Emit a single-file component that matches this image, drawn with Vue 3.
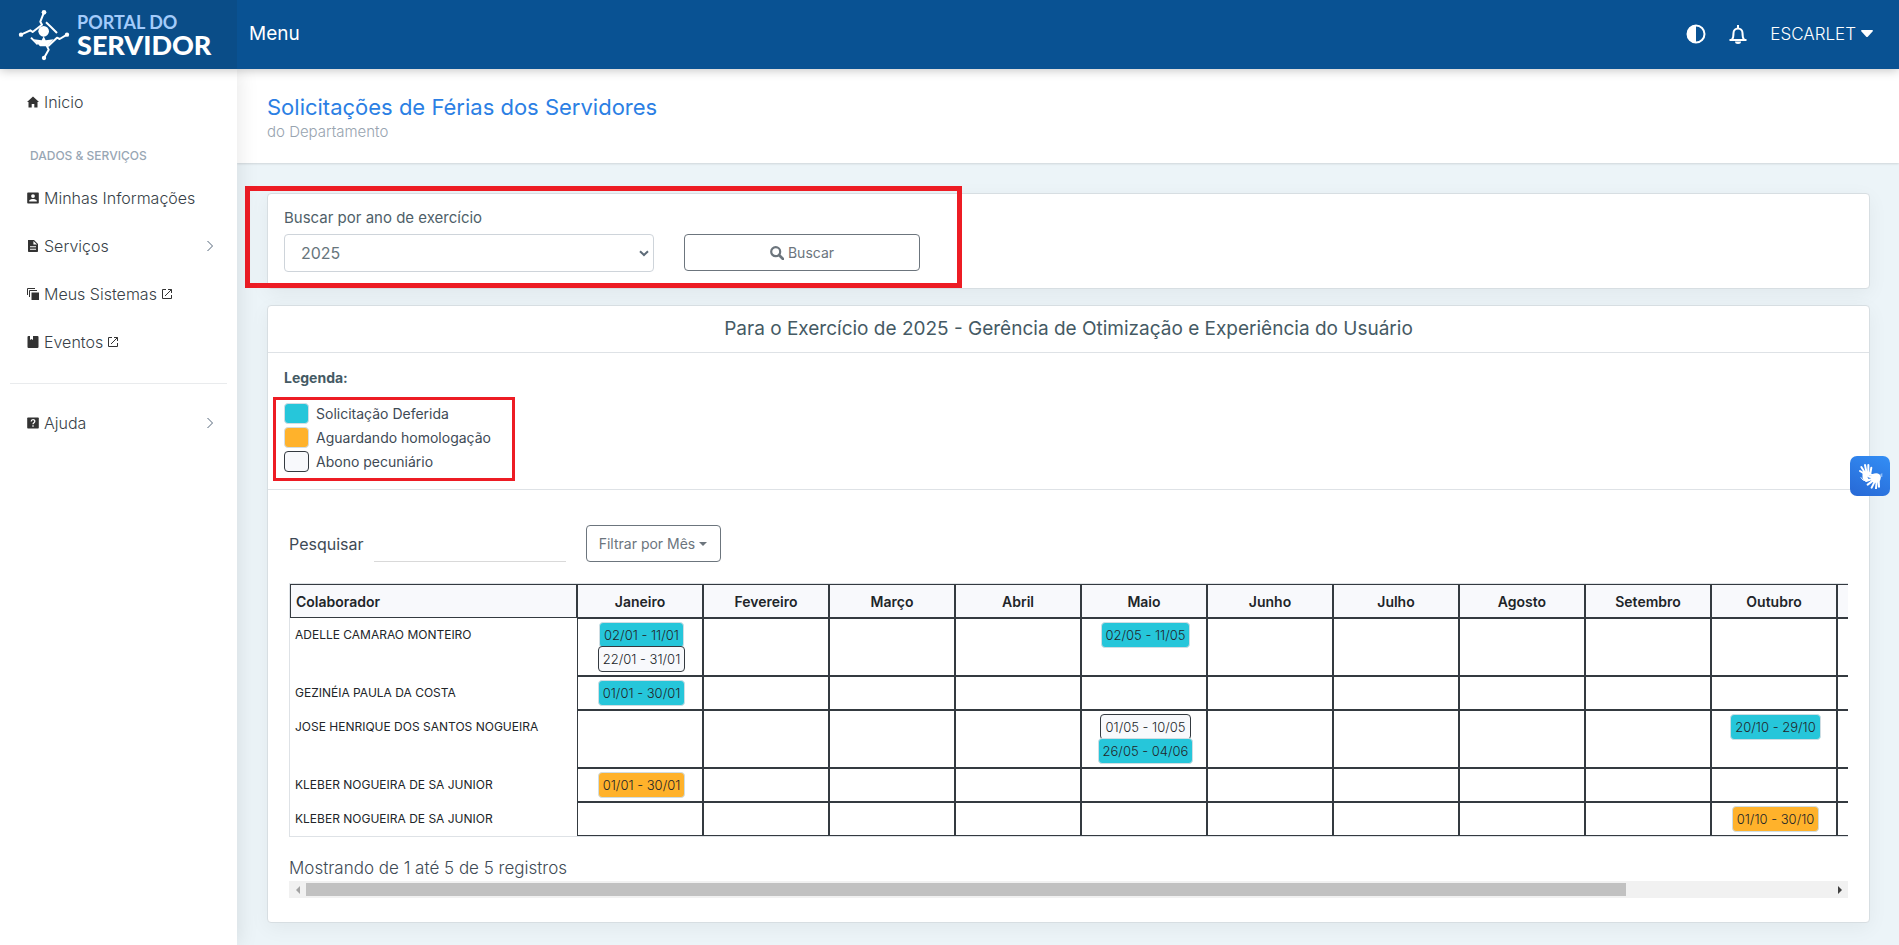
<script setup>
import { ref, onMounted } from 'vue'

const months = ['Janeiro', 'Fevereiro', 'Março', 'Abril', 'Maio', 'Junho', 'Julho', 'Agosto', 'Setembro', 'Outubro', 'Novembro', 'Dezembro']

const rows = [
  {
    name: 'ADELLE CAMARAO MONTEIRO',
    periods: {
      0: [{ text: '02/01 - 11/01', kind: 'granted' }, { text: '22/01 - 31/01', kind: 'bonus' }],
      4: [{ text: '02/05 - 11/05', kind: 'granted' }],
    },
  },
  { name: 'GEZINÉIA PAULA DA COSTA', periods: { 0: [{ text: '01/01 - 30/01', kind: 'granted' }] } },
  {
    name: 'JOSE HENRIQUE DOS SANTOS NOGUEIRA',
    periods: {
      4: [{ text: '01/05 - 10/05', kind: 'bonus' }, { text: '26/05 - 04/06', kind: 'granted' }],
      9: [{ text: '20/10 - 29/10', kind: 'granted' }],
    },
  },
  { name: 'KLEBER NOGUEIRA DE SA JUNIOR', periods: { 0: [{ text: '01/01 - 30/01', kind: 'pending' }] } },
  { name: 'KLEBER NOGUEIRA DE SA JUNIOR', periods: { 9: [{ text: '01/10 - 30/10', kind: 'pending' }] } },
]

const legend = [
  { text: 'Solicitação Deferida', kind: 'granted' },
  { text: 'Aguardando homologação', kind: 'pending' },
  { text: 'Abono pecuniário', kind: 'bonus' },
]

const year = ref('2025')
const search = ref('')
const scroller = ref(null)
const thumb = ref(86)
const offset = ref(0)

function measure() {
  const el = scroller.value
  if (!el) return
  thumb.value = (el.clientWidth / el.scrollWidth) * 100
  offset.value = (el.scrollLeft / el.scrollWidth) * 100
}
function move(step) {
  scroller.value.scrollLeft += step
  measure()
}
onMounted(() => {
  measure()
  window.addEventListener('resize', measure)
})
</script>

<template>
  <div class="app">
    <header class="topbar">
      <a class="brand" href="#">
        <svg class="brand-mark" viewBox="54 30 156 156" aria-hidden="true">
          <g fill="none" stroke="#fff" stroke-width="6" stroke-linejoin="round">
            <path d="M132 40 121 68l5 9-28 22-7-5-28 13" />
            <path d="M138 70l15 14 18 18" />
            <path d="M201 107l-22 13-8-4-27 26" />
            <path d="M93 116l20 20" />
            <path d="M132 177l14-25-6-12" />
          </g>
          <g fill="#fff">
            <circle cx="132" cy="40" r="7" />
            <circle cx="63" cy="107" r="6.500" />
            <circle cx="201" cy="107" r="6.500" />
            <circle cx="132" cy="177" r="6.500" />
            <circle cx="131" cy="97" r="16" />
            <path d="M101 121l24 3 6-12 6 12 24-3-19 21h-22z" />
          </g>
        </svg>
        <span class="brand-text"><span class="brand-top">PORTAL DO</span><span class="brand-main">SERVIDOR</span></span>
      </a>
      <button class="menu-button" type="button">Menu</button>
      <div class="tools">
        <button class="icon-button" type="button" aria-label="Contraste">
          <svg width="20" height="20" viewBox="0 0 20 20"><circle cx="10" cy="10" r="8.500" fill="none" stroke="#fff" stroke-width="2" /><path d="M10 1a9 9 0 0 0 0 18z" fill="#fff" /></svg>
        </button>
        <button class="icon-button" type="button" aria-label="Notificações">
          <svg width="20" height="20" viewBox="0 0 20 20"><path d="M1.500 16h17M4 15.500c1.500-1.700 1.500-3 1.500-6.500a4.500 4.500 0 0 1 9 0c0 3.500 0 4.800 1.500 6.500M10 4V1" fill="none" stroke="#fff" stroke-width="2" /><path d="M7 17.500h6a3 2.500 0 0 1-6 0z" fill="#fff" /></svg>
        </button>
        <button class="user-button" type="button">ESCARLET <svg width="12" height="7" viewBox="0 0 12 7"><path d="M0 1q0-1 1-1h10q1 0 1 1L7 6.500q-1 1-2 0z" fill="#fff" /></svg></button>
      </div>
    </header>

    <div class="body">
      <nav class="sidebar">
        <a class="nav-item" href="#">
          <svg class="nav-icon" viewBox="0 0 12 12"><path d="M6 .5 12 6h-1.500v5.500H7.300V8H4.700v3.500H1.500V6H0z" /></svg>Inicio
        </a>
        <h2 class="nav-title">DADOS &amp; SERVIÇOS</h2>
        <a class="nav-item" href="#">
          <svg class="nav-icon" viewBox="0 0 12 12"><path fill-rule="evenodd" d="M1 .5h10a.8.8 0 0 1 .8.8v9.400a.8.8 0 0 1-.8.8H1a.8.8 0 0 1-.8-.8V1.300A.8.8 0 0 1 1 .5zM6 2.200a1.900 1.900 0 1 0 0 3.800 1.900 1.900 0 0 0 0-3.800zM2.200 9.500h7.600V8.700C9.800 7.500 7.300 7 6 7s-3.800.5-3.800 1.700z" /></svg>Minhas Informações
        </a>
        <a class="nav-item" href="#">
          <svg class="nav-icon" viewBox="0 0 12 12"><path fill-rule="evenodd" d="M1 0h6l4 4v7.200a.8.800 0 0 1-.8.800H1.800a.8.800 0 0 1-.8-.8zM6.400 1v3.600H10zM3 6.300v1h6v-1zM3 8.700v1h6v-1z" /></svg>Serviços
          <svg class="chevron" viewBox="0 0 8 12"><path d="M1.500 1 6.500 6l-5 5" /></svg>
        </a>
        <a class="nav-item" href="#">
          <svg class="nav-icon" viewBox="0 0 12 12"><path d="M4.500 4.500H12V12H4.500z" /><path d="M.5 7V.5H8M2.500 9V2.500H10" fill="none" stroke="#333" /></svg>Meus Sistemas
          <svg class="external" viewBox="0 0 10 10"><path d="M4 .5H.5v9h9V6M6 .5h3.500V4M9.500.5 3 7" /></svg>
        </a>
        <a class="nav-item" href="#">
          <svg class="nav-icon" viewBox="0 0 12 12"><path d="M1.500 0H3v4l1.500-1L6 4V0h4.500q1 0 1 1v10q0 1-1 1h-9q-1 0-1-1V1q0-1 1-1z" /></svg>Eventos
          <svg class="external" viewBox="0 0 10 10"><path d="M4 .5H.5v9h9V6M6 .5h3.500V4M9.500.5 3 7" /></svg>
        </a>
        <hr class="nav-line" />
        <a class="nav-item" href="#">
          <svg class="nav-icon" viewBox="0 0 12 12"><path d="M1 .5h10q.8 0 .8.8v9.400q0 .8-.8.8H1q-.8 0-.8-.8V1.300Q.2.500 1 .5z" /><path d="M4.200 4.500C4.200 2 7.800 2 7.800 4.300 7.800 5.700 6 5.700 6 7.300M6 8.300v1.500" fill="none" stroke="#fff" stroke-width="1.300" /></svg>Ajuda
          <svg class="chevron" viewBox="0 0 8 12"><path d="M1.500 1 6.500 6l-5 5" /></svg>
        </a>
      </nav>

      <main class="content">
        <div class="page-head">
          <h1>Solicitações de Férias dos Servidores</h1>
          <p>do Departamento</p>
        </div>

        <div class="cards">
          <section class="card">
            <form class="search-form" @submit.prevent>
              <div class="year-field">
                <label for="year">Buscar por ano de exercício</label>
                <div class="select-wrap">
                  <select id="year" v-model="year"><option>2025</option><option>2024</option></select>
                  <svg class="select-arrow" width="10" height="7" viewBox="0 0 10 7"><path d="M1 1.200 5 5l4-3.800" fill="none" stroke="#5d6b78" stroke-width="2" /></svg>
                </div>
              </div>
              <button class="outline-button submit" type="submit">
                <svg width="14" height="14" viewBox="0 0 14 14"><circle cx="5.700" cy="5.700" r="4.500" fill="none" stroke="#6c757d" stroke-width="2.200" /><path d="m9 9 4 4" stroke="#6c757d" stroke-width="2.600" stroke-linecap="round" /></svg>
                Buscar
              </button>
            </form>
            <div class="highlight highlight-search"></div>
          </section>

          <section class="card">
            <h2 class="card-title">Para o Exercício de 2025 - Gerência de Otimização e Experiência do Usuário</h2>
            <div class="legend">
              <h3>Legenda:</h3>
              <ul>
                <li v-for="item in legend" :key="item.text"><span class="swatch" :class="item.kind"></span>{{ item.text }}</li>
                <li class="highlight highlight-legend" aria-hidden="true"></li>
              </ul>
            </div>

            <div class="table-area">
              <div class="filters">
                <label for="search">Pesquisar</label>
                <input id="search" v-model="search" type="text" />
                <button class="outline-button filter" type="button">Filtrar por Mês<span class="caret"></span></button>
              </div>

              <div ref="scroller" class="scroller">
                <table>
                  <colgroup>
                    <col class="col-name" />
                    <col v-for="m in months" :key="m" class="col-month" />
                  </colgroup>
                  <thead>
                    <tr>
                      <th scope="col" class="th-name">Colaborador</th>
                      <th v-for="m in months" :key="m" scope="col">{{ m }}</th>
                    </tr>
                  </thead>
                  <tbody>
                    <tr v-for="(row, r) in rows" :key="r">
                      <td class="name">{{ row.name }}</td>
                      <td v-for="(m, i) in months" :key="m" class="slot">
                        <div v-for="p in row.periods[i]" :key="p.text" class="period"><span class="badge" :class="p.kind">{{ p.text }}</span></div>
                      </td>
                    </tr>
                  </tbody>
                </table>
              </div>
              <p class="summary">Mostrando de 1 até 5 de 5 registros</p>
              <div class="scrollbar">
                <button type="button" aria-label="Rolar para a esquerda" @click="move(-126)"><svg width="4" height="8" viewBox="0 0 4 8"><path d="M4 0v8L0 4z" fill="#a3a3a3" /></svg></button>
                <div class="track"><div class="thumb" :style="{ width: thumb + '%', marginLeft: offset + '%' }"></div></div>
                <button type="button" aria-label="Rolar para a direita" @click="move(126)"><svg width="4" height="8" viewBox="0 0 4 8"><path d="M0 0v8l4-4z" fill="#404040" /></svg></button>
              </div>
            </div>
          </section>
        </div>
      </main>
    </div>

    <button class="sign-button" type="button" aria-label="Conteúdo acessível em Libras">
      <svg width="26" height="26" viewBox="0 0 78 78">
        <g stroke="#fff" fill="none" stroke-linecap="round" stroke-width="6">
          <path d="M21 31 9 24M23 28 13 12M28 26 24 6M34 28V6M40 31l3-17" />
          <path d="M45 48 27 54M48 53 32 65M53 56 44 74M59 56l-2 20M65 53l1 18" />
          <path d="M12 44q6 12 14 8" stroke-width="3" />
          <path d="M46 36q-12-4-16 2 8 4 16 5" />
        </g>
        <path d="M17 30q11-8 22-2l3 6-12 6 6 10-14 4q-8-8-5-24z" fill="#fff" />
        <path d="M45 34q14-7 22 0l5 6q0 12-8 18-14 4-22-7z" fill="#fff" />
        <path d="M70 34l6-4v12l-6-1z" fill="#8dbcf7" />
      </svg>
    </button>
  </div>
</template>

<style>
body {
  background: #ecf4f8;
}
</style>

<style scoped>
* {
  box-sizing: border-box;
}
.app {
  min-height: 100vh;
  display: flex;
  flex-direction: column;
  font-family: Inter, "Open Sans", sans-serif;
  font-weight: 300;
  color: #3e4a55;
  overflow: hidden;
}
button {
  font: inherit;
  border: 0;
  background: none;
  padding: 0;
  cursor: pointer;
}
h1, h2, h3, p, ul {
  margin: 0;
  padding: 0;
}
a {
  text-decoration: none;
}

.topbar {
  height: 69px;
  display: flex;
  align-items: center;
  background: #095293;
  color: #fff;
  position: relative;
  z-index: 3;
  box-shadow: 0 1px 10px rgba(0, 0, 0, 0.25);
}
.brand {
  width: 237px;
  height: 69px;
  padding-left: 18px;
  display: flex;
  align-items: center;
  gap: 7px;
  background: #0a4d88;
  color: #fff;
}
.brand-mark {
  width: 52px;
  height: 52px;
}
.brand-text {
  display: flex;
  flex-direction: column;
  font-family: Lato, sans-serif;
  font-weight: 700;
  white-space: nowrap;
}
.brand-top {
  font-size: 18px;
  line-height: 20px;
  color: #a3cbfb;
}
.brand-main {
  font-size: 27px;
  font-weight: 900;
  line-height: 26px;
}
.menu-button {
  margin-left: 12px;
  color: #fff;
  font-size: 19px;
  line-height: 24px;
  padding-bottom: 2px;
  font-weight: 400;
}
.tools {
  margin-left: auto;
  padding: 0 26px 2px 0;
  display: flex;
  align-items: center;
  gap: 22px;
}
.icon-button {
  width: 20px;
  height: 20px;
  display: flex;
}
.user-button {
  display: flex;
  align-items: center;
  gap: 5px;
  color: #fff;
  font-size: 17px;
}

.body {
  flex: 1;
  display: flex;
}
.sidebar {
  width: 237px;
  flex: none;
  padding: 9px 10px;
  background: #fff;
  position: relative;
  z-index: 2;
  box-shadow: 1px 0 20px rgba(0, 0, 0, 0.1);
}
.nav-item {
  height: 48px;
  padding: 0 13px 0 17px;
  display: flex;
  align-items: center;
  gap: 5px;
  color: #383f48;
  font-size: 16px;
}
.nav-icon {
  width: 12px;
  height: 12px;
  fill: #333;
}
.chevron {
  width: 8px;
  height: 12px;
  margin-left: auto;
  fill: none;
  stroke: #54667a;
}
.external {
  width: 10px;
  height: 10px;
  fill: none;
  stroke: #333;
}
.nav-title {
  padding: 20px 20px 8px;
  font-size: 12px;
  line-height: 20px;
  font-weight: 500;
  color: #98a6b4;
}
.nav-line {
  margin: 17px 0 15px;
  border: 0;
  border-top: 1px solid #e9ebed;
}

.content {
  flex: 1;
  min-width: 0;
}
.page-head {
  height: 94px;
  padding: 24px 30px 0;
  background: #fff;
  box-shadow: 0 1px 2px rgba(0, 0, 0, 0.12);
}
h1 {
  font-size: 22px;
  line-height: 28px;
  font-weight: 400;
  color: #2b7fe4;
}
.page-head p {
  font-size: 15px;
  line-height: 22px;
  color: #98a4b0;
}
.cards {
  padding: 30px 29px 22px 30px;
  display: flex;
  flex-direction: column;
  gap: 16px;
}
.card {
  position: relative;
  background: #fff;
  border: 1px solid #d7dee2;
  border-radius: 4px;
  box-shadow: 0 5px 20px rgba(0, 0, 0, 0.05);
}
.search-form {
  padding: 14px 16px 16px;
  display: flex;
  align-items: flex-end;
  gap: 30px;
}
.year-field {
  width: 370px;
}
.year-field label {
  display: block;
  font-size: 15px;
  line-height: 20px;
  font-weight: 400;
  color: #4f5f69;
  margin-bottom: 6px;
}
.select-wrap {
  position: relative;
}
select {
  display: block;
  width: 100%;
  height: 38px;
  padding: 0 16px;
  appearance: none;
  border: 1px solid #ced4da;
  border-radius: 4px;
  background: #fff;
  font: inherit;
  font-size: 16px;
  font-weight: 400;
  color: #67757c;
}
.select-arrow {
  position: absolute;
  right: 5px;
  top: 16px;
  pointer-events: none;
}
.outline-button {
  height: 37px;
  display: flex;
  align-items: center;
  justify-content: center;
  gap: 4px;
  border: 1px solid #6c757d;
  border-radius: 4px;
  color: #6c757d;
  font-size: 14px;
  font-weight: 400;
}
.submit {
  width: 236px;
  margin-bottom: 1px;
}
.highlight {
  position: absolute;
  pointer-events: none;
}
.highlight-search {
  left: -23px;
  top: -8px;
  width: 717px;
  height: 102px;
  border: 5px solid #ed1c24;
}
.card-title {
  height: 47px;
  border-bottom: 1px solid #dee2e6;
  text-align: center;
  font-size: 19px;
  line-height: 46px;
  font-weight: 400;
  color: #455a64;
}
.legend {
  padding: 14px 16px;
  border-bottom: 1px solid #dee2e6;
}
.legend h3 {
  font-size: 14px;
  line-height: 22px;
  font-weight: 700;
  color: #455a64;
  margin-bottom: 12px;
}
.legend ul {
  position: relative;
  list-style: none;
  padding-bottom: 2px;
}
.legend li {
  height: 24px;
  display: flex;
  align-items: center;
  gap: 7px;
  font-size: 14px;
  font-weight: 400;
}
.swatch {
  width: 25px;
  height: 21px;
  border: 1px solid #d3dde4;
  border-radius: 4px;
}
.legend .highlight-legend {
  left: -11px;
  top: -4px;
  width: 242px;
  height: 84px;
  border: 3px solid #ed1c24;
}
.granted {
  background: #26c6da;
}
.pending {
  background: #ffb22b;
}
.bonus {
  background: #f8f9fc;
  border-color: #343a40;
}

.table-area {
  padding: 35px 21px 24px;
}
.filters {
  display: flex;
  align-items: center;
  margin-bottom: 21px;
  font-size: 16px;
  font-weight: 400;
}
.filters input {
  width: 192px;
  height: 36px;
  margin: 0 20px 0 10px;
  border: 0;
  border-bottom: 1px solid #d9d9d9;
  font: inherit;
}
.filter {
  width: 135px;
}
.caret {
  border: 4px solid transparent;
  border-top-color: #6c757d;
  border-bottom: 0;
}
.scroller {
  overflow: hidden;
}
table {
  width: 1801px;
  table-layout: fixed;
  border-collapse: separate;
  border-spacing: 0;
  border: 1px solid #dee2e6;
  font-size: 13px;
  color: #212529;
}
.col-name {
  width: 287px;
}
.col-month {
  width: 126px;
}
th {
  height: 34px;
  padding: 0 5px;
  border: 1px solid #343a40;
  background: #f8f9fc;
  font-size: 14px;
  font-weight: 600;
  text-align: center;
}
.th-name {
  text-align: left;
}
td {
  padding: 4px 5px 4px 8px;
  border: 1px solid #343a40;
  vertical-align: top;
}
td.name {
  padding: 5px;
  border: 0;
  line-height: 24px;
  font-size: 12px;
  font-weight: 400;
}
.slot {
  height: 34px;
}
.period {
  height: 24px;
  display: flex;
  align-items: center;
  justify-content: center;
}
.badge {
  flex: none;
  height: 26px;
  padding: 0 4px;
  border: 1px solid #cfdde3;
  border-radius: 4px;
  line-height: 24px;
  position: relative;
  white-space: nowrap;
}
.badge.bonus {
  border-color: #343a40;
}
.summary {
  padding-top: 18px;
  font-size: 17px;
  line-height: 26px;
}
.scrollbar {
  height: 17px;
  display: flex;
  background: #f1f1f1;
}
.scrollbar button {
  width: 17px;
  display: flex;
  align-items: center;
  justify-content: center;
}
.track {
  flex: 1;
  padding: 2px 0;
}
.thumb {
  height: 13px;
  background: #c1c1c1;
}
.sign-button {
  position: fixed;
  right: 9px;
  top: 456px;
  width: 40px;
  height: 40px;
  z-index: 4;
  display: flex;
  align-items: center;
  justify-content: center;
  border-radius: 7px;
  background: linear-gradient(25deg, #2768d5, #338ef5);
}
</style>
